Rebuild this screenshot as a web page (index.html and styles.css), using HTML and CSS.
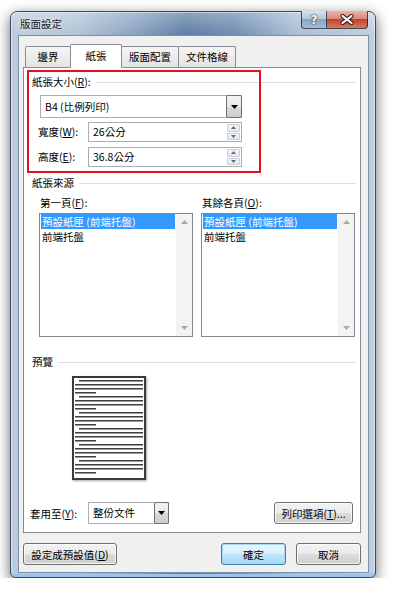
FILE: index.html
```html
<!DOCTYPE html>
<html lang="zh-Hant">
<head>
    <meta charset="UTF-8">
    <meta name="viewport" content="width=device-width, initial-scale=1.0">
    <title>版面設定</title>
    <link rel="stylesheet" href="styles.css">
</head>
<body>
    <div class="window">
        <div class="titlebar">
            <span class="title">版面設定</span>
            <div class="caption">
                <span class="cap help">?</span>
                <span class="cap close">
                    <svg width="14" height="11" viewBox="0 0 14 11">
                        <path d="M2.5 2l9 7M11.5 2l-9 7" stroke="#3b2522" stroke-width="4.2" stroke-linecap="round"/>
                        <path d="M2.5 2l9 7M11.5 2l-9 7" stroke="#fff" stroke-width="2.2" stroke-linecap="round"/>
                    </svg>
                </span>
            </div>
        </div>

        <div class="client">
            <div class="tabs">
                <span class="tab t1">邊界</span>
                <span class="tab t2 active">紙張</span>
                <span class="tab t3">版面配置</span>
                <span class="tab t4">文件格線</span>
            </div>

            <div class="panel">
                <div class="mark"></div>

                <div class="group-title">紙張大小(<u>R</u>):</div>
                <div class="combo paper-size">
                    <span class="value">B4 (比例列印)</span>
                    <span class="drop"><svg width="7" height="4" viewBox="0 0 7 4"><path d="M0 0h7L3.5 4z" fill="#000"/></svg></span>
                </div>
                <div class="field-row">
                    <span class="field-label">寬度(<u>W</u>):</span>
                    <div class="spin">
                        <span class="value">26公分</span>
                        <span class="arrows">
                            <span><svg width="5" height="3" viewBox="0 0 5 3"><path d="M0 3h5L2.5 0z" fill="#4d6f9c"/></svg></span>
                            <span><svg width="5" height="3" viewBox="0 0 5 3"><path d="M0 0h5L2.5 3z" fill="#4d6f9c"/></svg></span>
                        </span>
                    </div>
                </div>
                <div class="field-row second">
                    <span class="field-label">高度(<u>E</u>):</span>
                    <div class="spin">
                        <span class="value">36.8公分</span>
                        <span class="arrows">
                            <span><svg width="5" height="3" viewBox="0 0 5 3"><path d="M0 3h5L2.5 0z" fill="#4d6f9c"/></svg></span>
                            <span><svg width="5" height="3" viewBox="0 0 5 3"><path d="M0 0h5L2.5 3z" fill="#4d6f9c"/></svg></span>
                        </span>
                    </div>
                </div>

                <div class="group-title source">紙張來源</div>
                <div class="trays">
                    <div class="tray">
                        <div class="tray-label">第一頁(<u>F</u>):</div>
                        <div class="listbox">
                            <div class="items">
                                <div class="item sel">預設紙匣 (前端托盤)</div>
                                <div class="item">前端托盤</div>
                            </div>
                            <div class="vscroll">
                                <svg width="7" height="4" viewBox="0 0 7 4"><path d="M0 4h7L3.5 0z" fill="#a8a8a8"/></svg>
                                <svg width="7" height="4" viewBox="0 0 7 4"><path d="M0 0h7L3.5 4z" fill="#a8a8a8"/></svg>
                            </div>
                        </div>
                    </div>
                    <div class="tray">
                        <div class="tray-label">其餘各頁(<u>O</u>):</div>
                        <div class="listbox">
                            <div class="items">
                                <div class="item sel">預設紙匣 (前端托盤)</div>
                                <div class="item">前端托盤</div>
                            </div>
                            <div class="vscroll">
                                <svg width="7" height="4" viewBox="0 0 7 4"><path d="M0 4h7L3.5 0z" fill="#a8a8a8"/></svg>
                                <svg width="7" height="4" viewBox="0 0 7 4"><path d="M0 0h7L3.5 4z" fill="#a8a8a8"/></svg>
                            </div>
                        </div>
                    </div>
                </div>

                <div class="group-title preview-title">預覽</div>
                <div class="page">
                    <div class="para"><div class="ln indent"></div><div class="ln"></div><div class="ln"></div><div class="ln short"></div></div>
                    <div class="para"><div class="ln indent"></div><div class="ln"></div><div class="ln"></div><div class="ln short"></div></div>
                    <div class="para"><div class="ln indent"></div><div class="ln"></div><div class="ln"></div><div class="ln short"></div></div>
                    <div class="para"><div class="ln indent"></div><div class="ln"></div><div class="ln"></div><div class="ln short"></div></div>
                    <div class="para"><div class="ln indent"></div><div class="ln"></div><div class="ln"></div><div class="ln short"></div></div>
                    <div class="para"><div class="ln indent"></div><div class="ln"></div><div class="ln"></div><div class="ln short"></div></div>
                </div>

                <div class="apply-row">
                    <span class="apply-label">套用至(<u>Y</u>):</span>
                    <div class="combo apply">
                        <span class="value">整份文件</span>
                        <span class="drop"><svg width="7" height="4" viewBox="0 0 7 4"><path d="M0 0h7L3.5 4z" fill="#000"/></svg></span>
                    </div>
                    <button class="btn options">列印選項(<u>T</u>)...</button>
                </div>
            </div>

            <div class="footer">
                <button class="btn set-default">設定成預設值(<u>D</u>)</button>
                <button class="btn default ok">確定</button>
                <button class="btn cancel">取消</button>
            </div>
        </div>
    </div>
</body>
</html>
```

FILE: styles.css
```css
body {
    margin: 0;
    background: #fff;
    font-family: "Noto Sans CJK TC", "Noto Sans", sans-serif;
    font-size: 10.5px;
    color: #000;
}

u {
    text-decoration: underline;
    text-underline-offset: 1px;
}

/* Window frame (Aero glass) */
.window {
    box-sizing: border-box;
    width: 366px;
    height: 567px;
    margin: 11px 0 0 10px;
    padding: 0 6px 4px 7px;
    display: flex;
    flex-direction: column;
    border: 1px solid #3b4a5c;
    border-radius: 7px 7px 5px 5px;
    background:
        linear-gradient(180deg, rgba(255, 255, 255, 0.3), rgba(255, 255, 255, 0) 24px),
        linear-gradient(90deg, #bccbdc 0%, #b0c3d7 18%, #8aa3c1 33%, #5b7ca3 48%, #6f8db1 62%, #a8bcd3 78%, #bfcfe1 100%);
    box-shadow: 0 4px 14px rgba(0, 0, 0, 0.6), inset 0 -3px 0 #9cc4ec, inset 0 0 0 1px rgba(255, 255, 255, 0.45);
}

.titlebar {
    height: 23px;
    display: flex;
    align-items: flex-start;
}

.title {
    padding-left: 2px;
    line-height: 23px;
    color: #1b1b1b;
    text-shadow: 0 0 5px rgba(255, 255, 255, 0.9);
}

.caption {
    display: flex;
    margin: -1px 1px 0 auto;
}

.cap {
    box-sizing: border-box;
    height: 18px;
    display: flex;
    align-items: center;
    justify-content: center;
    border: 1px solid rgba(20, 30, 45, 0.75);
    border-top: none;
}

.help {
    width: 26px;
    border-radius: 0 0 0 4px;
    background: linear-gradient(#d8e3ef 0%, #b4c7dc 45%, #88a2c2 50%, #a6bdd7 100%);
    color: #fff;
    font-family: "DejaVu Sans", sans-serif;
    font-weight: bold;
    font-size: 12px;
    text-shadow: 0 0 2px #1d2a3a, 0 0 1px #1d2a3a;
}

.close {
    width: 41px;
    border-left: none;
    border-radius: 0 0 4px 0;
    background: linear-gradient(#ebb3a7 0%, #da8b7b 45%, #c6432e 50%, #d57a61 100%);
}

/* Client area */
.client {
    flex: 1;
    box-sizing: border-box;
    display: flex;
    flex-direction: column;
    padding: 8px 7px 0 4px;
    border: 1px solid #7c8fa6;
    background: #f0f0f0;
}

.tabs {
    display: flex;
    align-items: flex-end;
    height: 23px;
    padding-left: 2px;
}

.tab {
    box-sizing: border-box;
    height: 21px;
    margin-left: -1px;
    border: 1px solid #898c95;
    border-bottom: none;
    border-radius: 2px 2px 0 0;
    background: linear-gradient(#f5f5f5, #e3e3e3);
    text-align: center;
    line-height: 20px;
}

.tab.t1 { width: 46px; margin-left: 0; }
.tab.t2 { width: 52px; }
.tab.t3 { width: 58px; }
.tab.t4 { width: 58px; }

.tab.active {
    height: 24px;
    margin-bottom: -1px;
    position: relative;
    z-index: 1;
    background: #fff;
    line-height: 22px;
}

.panel {
    box-sizing: border-box;
    height: 466px;
    padding: 7px 4px 0 8px;
    position: relative;
    border: 1px solid #898c95;
    background: #fff;
}

/* Red annotation box */
.mark {
    position: absolute;
    left: 3px;
    top: 2px;
    box-sizing: border-box;
    width: 234px;
    height: 103px;
    border: 2px solid #e8101c;
}

.group-title {
    display: flex;
    align-items: center;
    height: 14px;
    line-height: 14px;
}

.group-title::after {
    content: "";
    flex: 1;
    height: 1px;
    margin-left: 5px;
    background: #d5dfe5;
}

.group-title.source { margin-top: 9px; }
.group-title.preview-title { margin-top: 18px; }

/* Combo boxes */
.combo {
    box-sizing: border-box;
    display: flex;
    border: 1px solid #abadb3;
    background: #fff;
}

.combo .value {
    flex: 1;
    padding-left: 4px;
}

.combo .drop {
    box-sizing: border-box;
    width: 16px;
    margin: -1px -1px -1px 0;
    display: flex;
    align-items: center;
    justify-content: center;
    border: 1px solid #707070;
    border-radius: 2px;
    background: linear-gradient(#f3f3f3 0%, #e8e8e8 50%, #d9d9d9 51%, #cdcdcd 100%);
}

.paper-size {
    width: 202px;
    height: 23px;
    margin: 6px 0 0 8px;
    line-height: 21px;
}

.apply {
    width: 81px;
    height: 22px;
    line-height: 20px;
}

.apply .drop { width: 15px; }

/* Spin fields */
.field-row {
    display: flex;
    margin: 4px 0 0 6px;
}

.field-row.second { margin-top: 5px; }

.field-label {
    width: 50px;
    line-height: 20px;
}

.spin {
    box-sizing: border-box;
    width: 154px;
    height: 20px;
    display: flex;
    border: 1px solid #abadb3;
}

.spin .value {
    flex: 1;
    padding-left: 4px;
    line-height: 18px;
}

.spin .arrows {
    width: 13px;
    display: flex;
    flex-direction: column;
    gap: 1px;
    padding: 1px 1px 1px 0;
}

.spin .arrows span {
    flex: 1;
    display: flex;
    align-items: center;
    justify-content: center;
    border: 1px solid #c9ced6;
    border-radius: 1px;
    background: linear-gradient(#f7f7f7, #e6e8eb);
}

/* Paper trays */
.trays {
    display: flex;
    gap: 8px;
    margin: 6px 0 0 7px;
}

.tray { width: 154px; }

.tray-label {
    height: 14px;
    line-height: 14px;
    margin-left: 1px;
}

.listbox {
    box-sizing: border-box;
    height: 124px;
    margin-top: 3px;
    display: flex;
    border: 1px solid #828790;
}

.items {
    flex: 1;
    padding: 0 1px;
}

.item {
    height: 15px;
    line-height: 15px;
    padding-left: 1px;
    white-space: nowrap;
}

.item.sel {
    background: #3399ff;
    color: #fff;
}

.vscroll {
    width: 16px;
    display: flex;
    flex-direction: column;
    justify-content: space-between;
    align-items: center;
    padding: 6px 0 6px;
    background: #f3f3f3;
}

/* Preview page */
.page {
    box-sizing: border-box;
    width: 74px;
    height: 104px;
    margin: 7px 0 0 40px;
    padding: 2px 1px 0 1px;
    overflow: hidden;
    border: 2px solid #3a3a3a;
    background: #fff;
    box-shadow: 1px 1px 2px rgba(0, 0, 0, 0.35);
}

.para { margin-bottom: 2px; }

.ln {
    height: 2px;
    margin-bottom: 2px;
    background: linear-gradient(#404040 50%, #9a9a9a 50%);
}

.ln.indent { margin-left: 4px; }
.ln.short { width: 21px; }

/* Apply row */
.apply-row {
    display: flex;
    align-items: center;
    height: 22px;
    margin: 22px 3px 0 -2px;
}

.apply-label { width: 58px; }

/* Buttons */
.btn {
    box-sizing: border-box;
    height: 22px;
    padding: 0;
    border: 1px solid #707070;
    border-radius: 3px;
    background: linear-gradient(#f2f2f2 0%, #ebebeb 50%, #dddddd 51%, #cfcfcf 100%);
    box-shadow: inset 0 0 0 1px rgba(255, 255, 255, 0.75);
    font: inherit;
    color: #000;
}

.options {
    width: 79px;
    margin-left: auto;
}

.footer {
    display: flex;
    gap: 10px;
    margin-top: 10px;
}

.set-default { width: 94px; }

.ok {
    width: 65px;
    margin-left: auto;
}

.cancel { width: 65px; }

.btn.default {
    border-color: #3c7fb1;
    box-shadow: inset 0 0 0 1px #a7d8f3;
    background: linear-gradient(#eaf6fd 0%, #d9f0fc 50%, #bee6fd 51%, #a7d9f5 100%);
}
```
